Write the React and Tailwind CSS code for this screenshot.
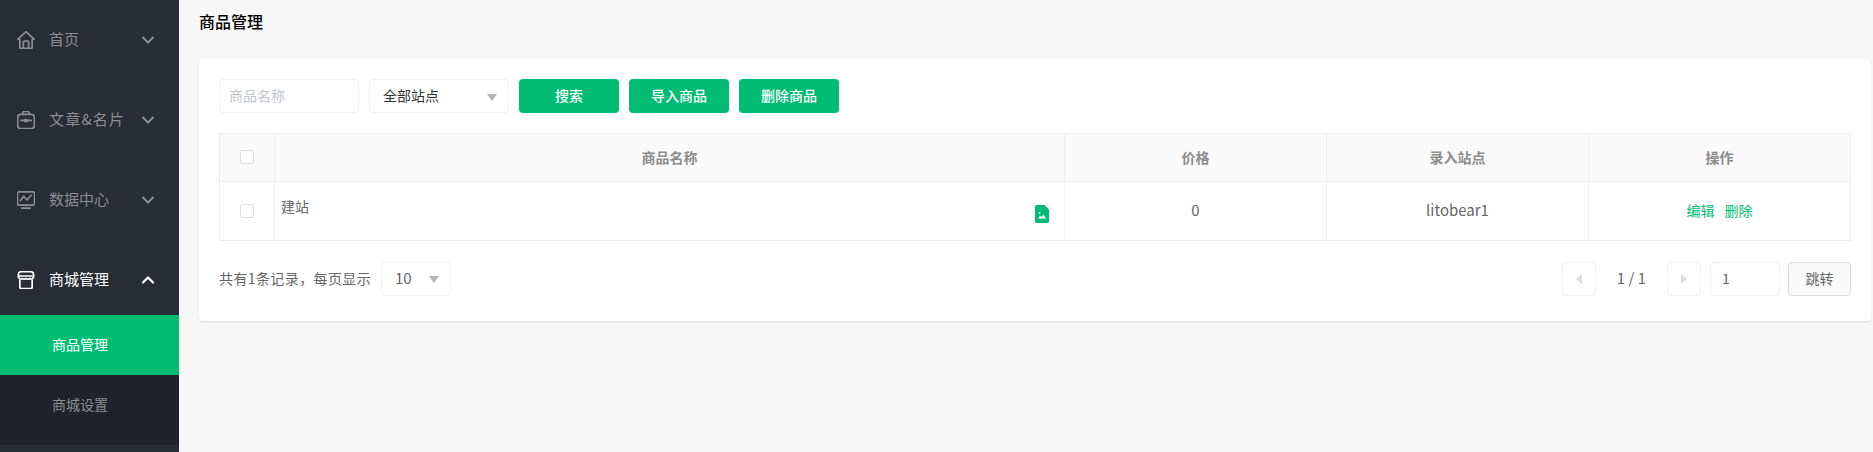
import { ChevronDown, ChevronUp } from "lucide-react";

const menus = [
  { title: "首页", icon: "home", label: "" },
  { title: "文章&名片", icon: "bag", label: "tracking-[1.2px]" },
  { title: "数据中心", icon: "chart", label: "" },
];

function MenuIcon({ name, className }) {
  return (
    <svg viewBox="0.500 0.500 19 19" fill="none" stroke="currentColor" strokeWidth="1.800" strokeLinejoin="round" strokeLinecap="round" className={className}>
      {name === "home" && (
        <>
          <path d="M1.500 9.200 10 1.200l8.500 8h-2v8.600a1 1 0 0 1-1 1h-11a1 1 0 0 1-1-1V9.200z" />
          <path d="M7.200 18.600v-6.400a1 1 0 0 1 1-1h3.600a1 1 0 0 1 1 1v6.400" />
        </>
      )}
      {name === "bag" && (
        <>
          <rect x="1.200" y="4" width="17.600" height="15" rx="3" />
          <path d="M6.500 4V3.200A2.200 2.200 0 0 1 8.700 1h2.600a2.200 2.200 0 0 1 2.200 2.200V4" />
          <path d="M4.500 10.500h11" />
          <path d="M9 9.500h2v2H9z" fill="currentColor" />
        </>
      )}
      {name === "chart" && (
        <>
          <rect x="1" y="1.500" width="18" height="14" rx="1.500" />
          <path d="M4 10.500 7.500 6l3.500 4 4.500-5" />
          <path d="M5.500 18.600h9" />
        </>
      )}
      {name === "shop" && (
        <>
          <path d="M5 1.200h10a3 3 0 0 1 3 3v2.600a2.400 2.400 0 0 1-4 1.500 3.400 3.400 0 0 1-4 0 3.400 3.400 0 0 1-4 0 2.400 2.400 0 0 1-4-1.500V4.200a3 3 0 0 1 3-3z" />
          <path d="M2 5.800h16" />
          <path d="M3.500 10v7.500A1.500 1.500 0 0 0 5 19h10a1.500 1.500 0 0 0 1.500-1.500V10" />
        </>
      )}
    </svg>
  );
}

function Sidebar() {
  return (
    <aside className="w-[179px] shrink-0 bg-[#282c34] h-[452px]">
      {menus.map((m) => (
        <div key={m.title} className="h-20 flex items-center pl-[17px] pr-[21px] text-[#8b8d91]">
          <MenuIcon name={m.icon} className="w-[18px] h-[18px]" />
          <span className={`ml-[14px] text-[15px] flex-1 pb-[2px] ${m.label}`}>{m.title}</span>
          <ChevronDown size={20} strokeWidth={2.4} />
        </div>
      ))}
      <div className="h-[75px] flex items-center pt-[5px] pl-[17px] pr-[21px] text-white">
        <MenuIcon name="shop" className="w-[18px] h-[18px]" />
        <span className="ml-[14px] text-[15px] flex-1 pb-[2px]">商城管理</span>
        <ChevronUp size={20} strokeWidth={2.6} />
      </div>
      <div className="h-[60px] flex items-center pb-[2px] pl-[52px] bg-[#00bd73] text-white text-sm">商品管理</div>
      <div className="h-[70px] flex items-start pt-[19px] pl-[52px] bg-[#1f2229] text-[#8b8d91] text-sm">商城设置</div>
    </aside>
  );
}

function Caret({ className }) {
  return <span className={`w-0 h-0 border-x-[5px] border-x-transparent border-t-[7px] border-t-[#b3b3b3] ${className}`} />;
}

function Checkbox() {
  return <span className="block w-[14px] h-[14px] border border-[#dcdfe6] rounded-[2px] bg-white" />;
}

function Toolbar() {
  return (
    <div className="flex gap-[10px] h-[34px] text-sm">
      <div className="w-[140px] border border-[#eef0f4] rounded-[4px] flex items-center pl-[9px] pb-[2px] text-[#c0c4cc]">商品名称</div>
      <div className="w-[140px] border border-[#eef0f4] rounded-[4px] flex items-center justify-between pl-[13px] pr-[11px] text-[#333]">
        <span className="pb-[2px]">全部站点</span>
        <Caret className="mt-[2px]" />
      </div>
      {["搜索", "导入商品", "删除商品"].map((t) => (
        <button key={t} className="w-[100px] pb-[2px] bg-[#00bd73] text-white font-medium rounded-[4px]">{t}</button>
      ))}
    </div>
  );
}

function Table() {
  return (
    <table className="w-[1632px] mt-5 table-fixed border-collapse border border-[#eceef3] text-sm">
      <colgroup>
        <col className="w-[55px]" />
        <col className="w-[790px]" />
        <col className="w-[262px]" />
        <col className="w-[262px]" />
        <col />
      </colgroup>
      <thead>
        <tr className="h-[48px] bg-[#fafafa] text-[#8c8c8c] font-bold">
          <th className="border border-[#eceef3]">
            <div className="flex justify-center -mt-[2px]"><Checkbox /></div>
          </th>
          <th className="border border-[#eceef3] pb-[2px]">商品名称</th>
          <th className="border border-[#eceef3] pb-[2px]">价格</th>
          <th className="border border-[#eceef3] pb-[2px]">录入站点</th>
          <th className="border border-[#eceef3] pb-[2px]">操作</th>
        </tr>
      </thead>
      <tbody>
        <tr className="h-[59px] text-[#666] text-center">
          <td className="border border-[#eceef3]">
            <div className="flex justify-center -mt-px"><Checkbox /></div>
          </td>
          <td className="border border-[#eceef3] px-[6px] text-left">
            <div className="flex justify-between items-start">
              <span className="-mt-[4px]">建站</span>
              <svg viewBox="0 0 14 18" className="w-[14px] h-[18px] mt-[5px] mr-[9px]">
                <path d="M2 0h7.500L14 4.500V16a2 2 0 0 1-2 2H2a2 2 0 0 1-2-2V2a2 2 0 0 1 2-2z" fill="#00bd73" />
                <path d="M3 13.500 5 10.500 6.500 12 8.500 9.500 11 13.500z" fill="#fff" />
                <circle cx="4.500" cy="8" r="1" fill="#fff" />
              </svg>
            </div>
          </td>
          <td className="border border-[#eceef3] text-[15px] pb-[2px]">0</td>
          <td className="border border-[#eceef3] text-[15px] pb-[2px]">litobear1</td>
          <td className="border border-[#eceef3] text-[#00bd73] pb-[2px]">
            <span className="mr-[10px]">编辑</span>
            <span>删除</span>
          </td>
        </tr>
      </tbody>
    </table>
  );
}

function Pager() {
  return (
    <div className="flex items-center justify-between mt-[21px] h-[34px] text-sm text-[#666]">
      <div className="flex items-center gap-[10px]">
        <span className="w-[152px] tracking-[0.4px] whitespace-nowrap pb-[2px]">共有1条记录，每页显示</span>
        <div className="w-[70px] h-[34px] border border-[#eef0f4] rounded-[4px] flex items-center justify-between pl-[13px] pr-[11px] text-[15px]">
          <span className="pb-[2px]">10</span>
          <Caret />
        </div>
      </div>
      <div className="flex items-center">
        <span className="w-[34px] h-[34px] border border-[#eef0f4] rounded-[4px] flex items-center justify-center">
          <span className="w-0 h-0 border-y-[5px] border-y-transparent border-r-[6px] border-r-[#dcdcdc]" />
        </span>
        <span className="w-[71px] text-center text-[15px] pb-[2px]">1 / 1</span>
        <span className="w-[34px] h-[34px] border border-[#eef0f4] rounded-[4px] flex items-center justify-center">
          <span className="w-0 h-0 border-y-[5px] border-y-transparent border-l-[6px] border-l-[#dcdcdc]" />
        </span>
        <span className="w-[70px] h-[34px] ml-[9px] pl-[11px] pb-[2px] border border-[#eef0f4] rounded-[4px] flex items-center text-sm">1</span>
        <button className="w-[63px] h-[34px] ml-2 pb-[2px] border border-[#dcdcdc] rounded-[4px] bg-[#fafafa] text-[#666]">跳转</button>
      </div>
    </div>
  );
}

export default function App() {
  return (
    <div className="flex w-[1873px] h-[452px] overflow-hidden bg-[#f7f7f7] font-['Noto_Sans_CJK_SC',sans-serif]">
      <Sidebar />
      <main className="flex-1 pl-5 pr-[2px]">
        <h1 className="h-[59px] pt-[9px] text-base font-medium text-black">商品管理</h1>
        <section className="bg-white rounded-[4px] shadow-[0_1px_2px_rgba(0,0,0,0.1)] p-5 h-[262px]">
          <Toolbar />
          <Table />
          <Pager />
        </section>
      </main>
    </div>
  );
}
